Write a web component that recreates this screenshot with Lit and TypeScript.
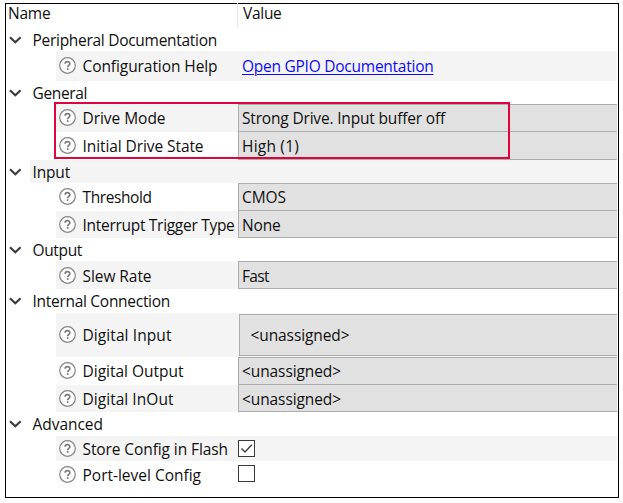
import { LitElement, html, css, svg, nothing } from "lit";
import { customElement } from "lit/decorators.js";
import { classMap } from "lit/directives/class-map.js";
import { styleMap } from "lit/directives/style-map.js";

type Kind = "group" | "link" | "combo" | "check";

interface Row {
  kind: Kind;
  label: string;
  labelWidth: number;
  height: number;
  // distance from the row's top to the text's line box
  pad: number;
  value?: string;
  valueWidth?: number;
  shaded?: boolean;
  checked?: boolean;
  tall?: boolean;
  joined?: boolean;
}

const rows: Row[] = [
  { kind: "group", label: "Peripheral Documentation", labelWidth: 183.5, height: 24, pad: 3 },
  { kind: "link", label: "Configuration Help", labelWidth: 134, height: 30, pad: 5, shaded: true, value: "Open GPIO Documentation", valueWidth: 190.5 },
  { kind: "group", label: "General", labelWidth: 53.5, height: 23, pad: 1.5 },
  { kind: "combo", label: "Drive Mode", labelWidth: 82, height: 28, pad: 4, shaded: true, value: "Strong Drive. Input buffer off", valueWidth: 202 },
  { kind: "combo", label: "Initial Drive State", labelWidth: 120, height: 28, pad: 4, value: "High (1)", valueWidth: 56, joined: true },
  { kind: "group", label: "Input", labelWidth: 36.5, height: 23, pad: 1.5, shaded: true },
  { kind: "combo", label: "Threshold", labelWidth: 68, height: 28, pad: 4, value: "CMOS", valueWidth: 43 },
  { kind: "combo", label: "Interrupt Trigger Type", labelWidth: 151, height: 27, pad: 4, shaded: true, value: "None", valueWidth: 37.5, joined: true },
  { kind: "group", label: "Output", labelWidth: 48.5, height: 23, pad: 2 },
  { kind: "combo", label: "Slew Rate", labelWidth: 68, height: 28, pad: 4.5, shaded: true, value: "Fast", valueWidth: 26 },
  { kind: "group", label: "Internal Connection", labelWidth: 136.5, height: 24, pad: 2 },
  { kind: "combo", label: "Digital Input", labelWidth: 88, height: 44, pad: 12, shaded: true, value: "<unassigned>", valueWidth: 98, tall: true },
  { kind: "combo", label: "Digital Output", labelWidth: 100, height: 28, pad: 4, value: "<unassigned>", valueWidth: 98 },
  { kind: "combo", label: "Digital InOut", labelWidth: 90, height: 27, pad: 4, shaded: true, value: "<unassigned>", valueWidth: 98, joined: true },
  { kind: "group", label: "Advanced", labelWidth: 69.5, height: 24, pad: 2 },
  { kind: "check", label: "Store Config in Flash", labelWidth: 144.5, height: 25, pad: 3, shaded: true, checked: true },
  { kind: "check", label: "Port-level Config", labelWidth: 117.5, height: 26, pad: 3.5 },
];

const chevron = svg`<path d="M1 1.3 L6.3 6.3 L11.6 1.3" fill="none" stroke="#3d3d3d" stroke-width="2.2"/>`;

@customElement("app-root")
export class AppRoot extends LitElement {
  static styles = css`
    :host {
      display: block;
      box-sizing: border-box;
      width: 623px;
      height: 503px;
      padding: 3px 4px 5px 5px;
      background: #fff;
      overflow: hidden;
      position: relative;
      font: 15.5px/20px "Open Sans", "Noto Sans", sans-serif;
      color: #101010;
    }
    .frame {
      box-sizing: border-box;
      width: 614px;
      height: 495px;
      border: 1px solid #000;
      padding-right: 1px;
    }
    .header {
      display: grid;
      grid-template-columns: 231px 1fr;
      height: 23px;
    }
    .name {
      padding-left: 2px;
      margin-top: -1px;
    }
    .value {
      border-left: 1px solid #e5e5e5;
      padding-left: 5px;
      margin-top: -1px;
    }
    .row {
      display: grid;
      grid-template-columns: 50px 182px 1fr;
    }
    .row.group {
      grid-template-columns: 24px 1fr;
    }
    .text {
      display: block;
      white-space: pre;
      width: max-content;
    }
    .toggle {
      display: block;
      width: 13px;
      height: 9px;
      margin: 6px 0 0 3px;
    }
    .title {
      box-sizing: border-box;
      padding-left: 2.5px;
    }
    .shaded .title,
    .shaded .label,
    .shaded .cell {
      background: #f4f4f4;
    }
    .label {
      box-sizing: border-box;
      grid-column: 2;
      display: flex;
      gap: 6.5px;
      padding-left: 3px;
    }
    .help {
      flex: none;
      display: block;
      width: 17px;
      height: 17px;
      margin-top: 1px;
    }
    .cell {
      min-width: 0;
      display: flex;
      align-items: stretch;
    }
    .link {
      padding-left: 4px;
      color: #0c0cf5;
      text-decoration: underline;
      text-decoration-thickness: 1px;
      text-underline-offset: 2px;
    }
    .combo {
      flex: 1;
      box-sizing: border-box;
      background: #e1e1e1;
      border: 1px solid #adadad;
      border-right: 0;
      padding-left: 3px;
    }
    .joined .combo {
      margin-top: -1px;
    }
    .tall .combo {
      margin: 1px 0 1px 1px;
      padding-left: 10.5px;
    }
    .box {
      box-sizing: border-box;
      width: 17px;
      height: 17px;
      border: 1px solid #3a3a3a;
      background: #fff;
      margin-top: 4px;
    }
    .box svg {
      display: block;
    }
    .highlight {
      position: absolute;
      left: 54px;
      top: 102px;
      width: 456px;
      height: 57px;
      box-sizing: border-box;
      border: 2px solid #e0043c;
    }
  `;

  firstUpdated() {
    this.renderRoot.querySelectorAll<HTMLElement>(".text").forEach((el) => {
      const target = Number(el.dataset.width);
      const natural = el.getBoundingClientRect().width;
      const count = el.textContent!.length;
      el.style.letterSpacing = `${(target + 1 - natural) / count}px`;
    });
  }

  text(value: string, width: number) {
    return html`<span class="text" data-width=${width}>${value}</span>`;
  }

  help() {
    return html`<svg class="help" viewBox="0 0 17 17">
      <circle cx="8.5" cy="8.5" r="7.8" fill="#fff" stroke="#858585" stroke-width="1.2" />
      <path d="M6.1 6.7 C6.1 3.9 10.9 3.9 10.9 6.6 C10.9 8.3 8.6 8.3 8.6 10.2" fill="none" stroke="#777" stroke-width="1.6" />
      <rect x="7.8" y="11.2" width="1.7" height="1.7" fill="#777" />
    </svg>`;
  }

  cell(r: Row) {
    if (r.kind === "combo") {
      const top = r.pad - 1 - (r.tall ? 1 : 0) + (r.joined ? 1 : 0);
      return html`<div class="combo" style=${styleMap({ paddingTop: `${top}px` })}>
        ${this.text(r.value!, r.valueWidth!)}
      </div>`;
    }
    if (r.kind === "link") {
      return html`<div class="link" style=${styleMap({ paddingTop: `${r.pad}px` })}>
        ${this.text(r.value!, r.valueWidth!)}
      </div>`;
    }
    return html`<div class="box">
      ${r.checked
        ? html`<svg width="15" height="15" viewBox="0 0 15 15">
            <path d="M2.5 7.5 L6 11 L12.8 3.8" fill="none" stroke="#444" stroke-width="1.5" />
          </svg>`
        : nothing}
    </div>`;
  }

  row(r: Row) {
    const classes = classMap({
      row: true,
      group: r.kind === "group",
      shaded: !!r.shaded,
      tall: !!r.tall,
      joined: !!r.joined,
    });
    const height = styleMap({ height: `${r.height}px` });
    const pad = styleMap({ paddingTop: `${r.pad}px` });
    if (r.kind === "group") {
      return html`<div class=${classes} style=${height}>
        <div style=${pad}><svg class="toggle" viewBox="0 0 13 9">${chevron}</svg></div>
        <div class="title" style=${pad}>${this.text(r.label, r.labelWidth)}</div>
      </div>`;
    }
    return html`<div class=${classes} style=${height}>
      <div class="label" style=${pad}>${this.help()}${this.text(r.label, r.labelWidth)}</div>
      <div class="cell">${this.cell(r)}</div>
    </div>`;
  }

  render() {
    return html`
      <div class="frame">
        <div class="header">
          <div class="name">${this.text("Name", 41.5)}</div>
          <div class="value">${this.text("Value", 37.5)}</div>
        </div>
        ${rows.map((r) => this.row(r))}
      </div>
      <div class="highlight"></div>
    `;
  }
}
